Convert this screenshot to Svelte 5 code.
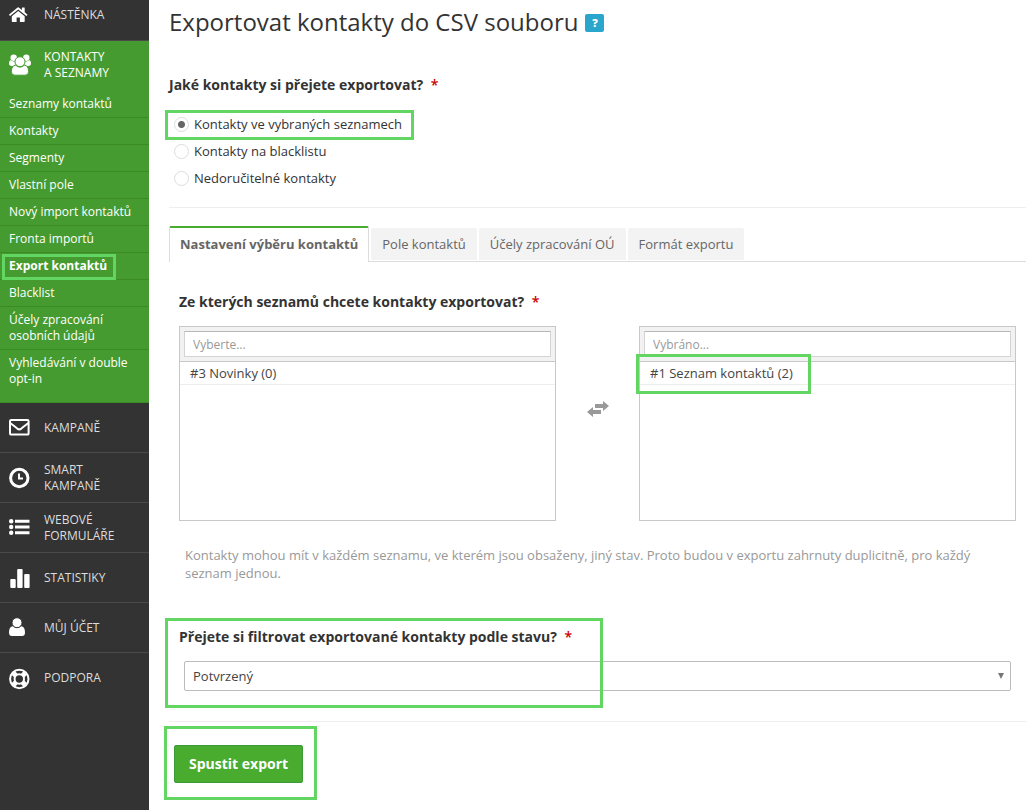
<script>
  const contacts = [
    'Seznamy kontaktů',
    'Kontakty',
    'Segmenty',
    'Vlastní pole',
    'Nový import kontaktů',
    'Fronta importů',
    'Export kontaktů',
    'Blacklist',
    'Účely zpracování osobních údajů',
    'Vyhledávání v double opt-in'
  ];
  const activeContact = 'Export kontaktů';

  const sections = [
    { label: 'Kampaně', icon: 'mail' },
    { label: 'Smart kampaně', icon: 'clock' },
    { label: 'Webové formuláře', icon: 'list' },
    { label: 'Statistiky', icon: 'bars' },
    { label: 'Můj účet', icon: 'user' },
    { label: 'Podpora', icon: 'ring' }
  ];

  const sources = [
    { id: 'lists', label: 'Kontakty ve vybraných seznamech' },
    { id: 'blacklist', label: 'Kontakty na blacklistu' },
    { id: 'bounced', label: 'Nedoručitelné kontakty' }
  ];
  let source = $state('lists');

  const tabs = ['Nastavení výběru kontaktů', 'Pole kontaktů', 'Účely zpracování OÚ', 'Formát exportu'];
  let tab = $state(0);
  let status = $state('confirmed');
</script>

{#snippet icon(name)}
  <svg class="icon" viewBox="0 0 23 23" aria-hidden="true">
    {#if name === 'home'}
      <path d="M9.2 8 2.8 13.300V18.300q0 .7.7.7H7.600V14.400h3.300V19H15q.7 0 .7-.7V13.300Z" />
      <path d="M.2 11.400 8.300 4.700q.9-.7 1.800 0L12.900 7V4.800q0-.4.4-.4h2q.4 0 .4.400V9.300l2.600 2.100q.3.300.1.600l-.7.8q-.3.300-.6 0L9.200 6.400 1.400 12.800q-.3.300-.6 0l-.7-.8q-.2-.3.100-.6Z" />
    {:else if name === 'group'}
      <circle cx="4.700" cy="3.700" r="3.200" />
      <circle cx="17.300" cy="3.700" r="3.200" />
      <path d="M1.800 6.300q3 2 5 .6-1.300 2.800.3 5H2.200Q0 11.900 0 9.800 0 6.500 1.800 6.300Z" />
      <path d="M20.200 6.300q-3 2-5 .6 1.300 2.800-.3 5h4.900q2.200 0 2.200-2.100 0-3.300-1.800-3.500Z" />
      <g class="front">
        <path d="M6.600 11.200q4.400 3.800 8.800 0 4.200.3 4.200 6.500 0 3.500-3.400 3.500H5.800q-3.400 0-3.400-3.500 0-6.200 4.200-6.500Z" />
        <circle cx="11" cy="7.700" r="5" />
      </g>
    {:else if name === 'mail'}
      <rect class="line" x="1" y="4" width="18.600" height="14.600" rx="1.200" />
      <path class="line" d="M1.200 7q4.300 3.300 7.100 5.600 2 1.500 4 0Q15 10.300 19.400 7" />
    {:else if name === 'clock'}
      <circle class="thick" cx="10.300" cy="12" r="8.700" />
      <path class="line" d="M10 7.500V12.500H14" />
    {:else if name === 'list'}
      <circle cx="2.200" cy="5.200" r="2.200" />
      <circle cx="2.200" cy="11" r="2.200" />
      <circle cx="2.200" cy="16.800" r="2.200" />
      <path d="M6 3.700h14.500v3H6ZM6 9.500h14.500v3H6ZM6 15.300h14.500v3H6Z" />
    {:else if name === 'bars'}
      <rect x="1.300" y="13" width="5.400" height="9" rx="1" />
      <rect x="8.200" y="3" width="5.400" height="19" rx="1" />
      <rect x="15.200" y="8" width="5.400" height="14" rx="1" />
    {:else if name === 'user'}
      <path d="M3.700 10.200q4.300 3.500 8.600 0Q16 10.500 16 16.500 16 20 13 20H3Q0 20 0 16.500 0 10.500 3.700 10.200Z" />
      <circle class="head" cx="8" cy="6.700" r="5" />
    {:else}
      <circle class="line" cx="10.300" cy="12" r="9.200" />
      <circle class="line" cx="10.300" cy="12" r="4.700" />
      <path class="buoy" d="M4.400 6.100 7.200 8.900M16.200 6.100 13.400 8.900M4.400 17.900 7.200 15.100M16.200 17.900 13.400 15.100" />
    {/if}
  </svg>
{/snippet}

<div class="page">
  <nav class="side">
    <a class="section first" href="#home">{@render icon('home')}<span>Nástěnka</span></a>
    <div class="open">
      <a class="section" href="#contacts">{@render icon('group')}<span>Kontakty a&nbsp;seznamy</span></a>
      <ul>
        {#each contacts as item}
          <li>
            <a href="#contacts" class:current={item === activeContact}>
              {item}
              {#if item === activeContact}<i class="mark mark-menu"></i>{/if}
            </a>
          </li>
        {/each}
      </ul>
    </div>
    {#each sections as s}
      <a class="section" href="#{s.icon}">{@render icon(s.icon)}<span>{s.label}</span></a>
    {/each}
  </nav>

  <main>
    <h1>Exportovat kontakty do CSV souboru <a class="help" href="#help" aria-label="Nápověda">?</a></h1>

    <fieldset>
      <legend>Jaké kontakty si přejete exportovat? <b>*</b></legend>
      {#each sources as s, i}
        <label class="choice">
          <input type="radio" name="source" value={s.id} bind:group={source} />
          {s.label}
          {#if i === 0}<i class="mark mark-choice"></i>{/if}
        </label>
      {/each}
    </fieldset>

    <div class="tabs" role="tablist">
      {#each tabs as t, i}
        <button type="button" role="tab" aria-selected={tab === i} class:active={tab === i} onclick={() => (tab = i)}>{t}</button>
      {/each}
    </div>

    <section class="panel">
      <h2>Ze kterých seznamů chcete kontakty exportovat? <b>*</b></h2>
      <div class="picker">
        <div class="box">
          <div class="search"><input type="text" placeholder="Vyberte..." aria-label="Vyberte" /></div>
          <ul><li>#3 Novinky (0)</li></ul>
        </div>
        <svg class="swap" viewBox="0 0 22 16" aria-hidden="true">
          <path d="M8 3h8V0l6 5-6 5V7H8ZM14 9v4H6v3L0 11l6-5v3Z" />
        </svg>
        <div class="box">
          <div class="search"><input type="text" placeholder="Vybráno..." aria-label="Vybráno" /></div>
          <ul><li>#1 Seznam kontaktů (2)<i class="mark mark-item"></i></li></ul>
        </div>
      </div>
      <p>Kontakty mohou mít v každém seznamu, ve kterém jsou obsaženy, jiný stav. Proto budou v exportu zahrnuty duplicitně, pro každý seznam jednou.</p>

      <div class="filter">
        <label for="status">Přejete si filtrovat exportované kontakty podle stavu? <b>*</b></label>
        <div class="select">
          <select id="status" bind:value={status}>
            <option value="confirmed">Potvrzený</option>
          </select>
          <svg viewBox="0 0 6 6" aria-hidden="true"><path d="M0 0h6L3 6Z" /></svg>
        </div>
        <i class="mark mark-filter"></i>
      </div>
    </section>

    <div class="actions">
      <button type="button">Spustit export<i class="mark mark-button"></i></button>
    </div>
  </main>
</div>

<style>
  :global(body) {
    margin: 0;
    background: #fff;
  }
  .page {
    display: flex;
    min-height: 100vh;
    overflow: hidden;
    font: 13px/18px 'Open Sans', 'Noto Sans', sans-serif;
    color: #333;
  }
  .page * {
    box-sizing: border-box;
  }
  ul {
    list-style: none;
    margin: 0;
    padding: 0;
  }
  a {
    color: inherit;
    text-decoration: none;
  }

  .side {
    flex: 0 0 149px;
    margin-top: -10px;
    background: #333;
    font-size: 12px;
    line-height: 16px;
  }
  .section {
    display: flex;
    align-items: center;
    gap: 12px;
    height: 50px;
    padding: 0 24px 0 9px;
    border-bottom: 1px solid #4a4a4a;
    color: #ddd;
    text-transform: uppercase;
  }
  .section.first {
    height: 51px;
    padding-bottom: 1px;
  }
  .section:last-child {
    border-bottom: 0;
  }
  .icon {
    flex: none;
    width: 23px;
    height: 23px;
    fill: #fff;
  }
  .front {
    stroke: #469b30;
    stroke-width: 1;
  }
  .head {
    stroke: #333;
    stroke-width: 1;
  }
  .line,
  .thick,
  .buoy {
    fill: none;
    stroke: #fff;
    stroke-width: 2;
  }
  .thick {
    stroke-width: 3;
  }
  .buoy {
    stroke-width: 5;
  }
  .open {
    padding-bottom: 10px;
    border-bottom: 1px solid #3a8a25;
    background: #469b30;
    color: #fff;
  }
  .open .section {
    padding-bottom: 1px;
    color: #fff;
    border-color: transparent;
  }
  .open li {
    padding: 5px 9px;
    border-bottom: 1px solid #3b8a26;
  }
  .open li:last-child {
    border-bottom: 0;
  }
  .open li a {
    position: relative;
    display: block;
  }
  .open .current {
    font-weight: 700;
  }

  main {
    flex: 1;
    min-width: 0;
    padding: 4px 10px 10px 20px;
  }
  h1 {
    display: flex;
    align-items: center;
    gap: 7px;
    margin: 0 0 37px;
    font-size: 24px;
    line-height: 35px;
    font-weight: 400;
  }
  .help {
    width: 19px;
    margin-top: 2px;
    border-radius: 2px;
    background: #2aa5cc;
    color: #fff;
    font-size: 11px;
    line-height: 18px;
    font-weight: 800;
    text-align: center;
  }
  fieldset {
    margin: 0;
    padding: 0 0 15px;
    border: 0;
    border-bottom: 1px solid #eee;
  }
  legend,
  h2,
  .filter label {
    display: block;
    margin: 0;
    padding: 0;
    font-size: 14px;
    line-height: 18px;
    font-weight: 700;
  }
  legend {
    margin-bottom: 17px;
  }
  legend b,
  h2 b,
  .filter b {
    margin-left: 4px;
    color: #c00;
    font-weight: 600;
  }
  .choice {
    position: relative;
    display: flex;
    align-items: flex-start;
    gap: 5px;
    width: fit-content;
    height: 27px;
    margin-left: 5px;
    line-height: 26px;
  }
  .choice input {
    appearance: none;
    width: 15px;
    height: 15px;
    margin: 6px 0 0;
    border: 1px solid #ddd;
    border-radius: 50%;
    background: #fff;
  }
  .choice input:checked {
    background: radial-gradient(circle, #666 3px, #fff 4px);
  }

  .tabs {
    display: flex;
    align-items: flex-start;
    gap: 2px;
    margin-top: 18px;
    box-shadow: inset 0 -1px #ddd;
  }
  .tabs button {
    height: 32px;
    margin: 2px 0 0;
    padding: 0 11px;
    border: 0;
    border-radius: 2px 2px 0 0;
    background: #f3f3f3;
    color: #666;
    font: inherit;
  }
  .tabs .active {
    height: 36px;
    margin: 0;
    padding: 0 10px 2px;
    border: 1px solid #ddd;
    border-top: 2px solid #49ab2f;
    border-bottom: 0;
    background: #fff;
    font-weight: 700;
  }

  .panel {
    padding: 31px 10px 30px;
    border-bottom: 1px solid #eee;
  }
  .picker {
    display: grid;
    grid-template-columns: 1fr 83px 1fr;
    margin-top: 15px;
  }
  .box {
    min-height: 195px;
    border: 1px solid #c8c8c8;
  }
  .search {
    padding: 4px;
    border-bottom: 1px solid #c8c8c8;
    background: #f2f2f2;
  }
  .search input {
    display: block;
    width: 100%;
    height: 26px;
    padding: 0 8px;
    border: 1px solid #d4d4d4;
    border-top-color: #b8b8b8;
    background: #fff;
    font: 12px 'Open Sans', sans-serif;
  }
  .search input::placeholder {
    color: #999;
  }
  .box li {
    position: relative;
    height: 23px;
    padding: 0 10px;
    border-bottom: 1px solid #eee;
    line-height: 22px;
    color: #444;
  }
  .swap {
    width: 22px;
    height: 16px;
    margin: 75px auto 0;
    fill: #999;
  }
  p {
    margin: 25px 30px 46px 6px;
    color: #999;
  }
  .filter {
    position: relative;
  }
  .select {
    position: relative;
    margin: 15px 5px 0;
  }
  select {
    display: block;
    appearance: none;
    width: 100%;
    height: 30px;
    padding: 0 8px;
    border: 1px solid #bbb;
    border-radius: 2px;
    background: #fff;
    color: #444;
    font: inherit;
  }
  .select svg {
    position: absolute;
    top: 12px;
    right: 7px;
    width: 6px;
    height: 6px;
    fill: #777;
    pointer-events: none;
  }
  .actions {
    padding: 23px 5px 0;
  }
  .actions button {
    position: relative;
    height: 38px;
    padding: 0 14px 2px;
    border: 1px solid #3a9a3a;
    border-radius: 2px;
    background: #49ac2f;
    color: #fff;
    font: 700 14px 'Open Sans', sans-serif;
  }

  .mark {
    position: absolute;
    border: 3px solid #62d562;
    pointer-events: none;
  }
  .mark-menu {
    inset: -4px auto -6px -7px;
    width: 114px;
  }
  .mark-choice {
    inset: -1px -12px -2px -9px;
  }
  .mark-item {
    top: -8px;
    left: -4px;
    width: 175px;
    height: 40px;
  }
  .mark-filter {
    inset: -10px auto -17px -14px;
    width: 438px;
  }
  .mark-button {
    inset: -20px -15px -18px -11px;
  }
</style>
